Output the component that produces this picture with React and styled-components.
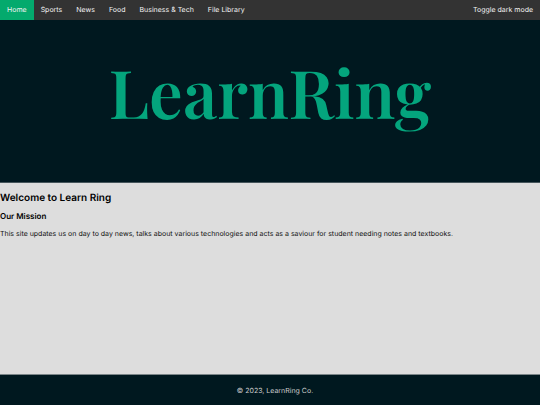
import React from 'react'
import styled, { createGlobalStyle } from 'styled-components'

const links = ['Sports', 'News', 'Food', 'Business & Tech', 'File Library']

const App = () => (
    <Page>
        <GlobalStyle />
        <Nav>
            <NavLink href="#home" $active>Home</NavLink>
            {links.map(name => <NavLink href="#" key={name}>{name}</NavLink>)}
            <Toggle type="button">Toggle dark mode</Toggle>
        </Nav>
        <Banner>
            <Logo>LearnRing</Logo>
        </Banner>
        <Main>
            <Title>Welcome to Learn Ring</Title>
            <SubTitle>Our Mission</SubTitle>
            <Text>
                This site updates us on day to day news, talks about various technologies
                and acts as a saviour for student needing notes and textbooks.
            </Text>
        </Main>
        <Footer>© 2023, LearnRing Co.</Footer>
    </Page>
)

export default App

const GlobalStyle = createGlobalStyle`
    * {
        box-sizing: border-box;
    }
    body {
        margin: 0;
        background: #ddd;
        color: #000;
        font-family: Inter, sans-serif;
        font-size: 7px;
        text-rendering: geometricPrecision;
    }
`
const Page = styled.div`
    min-height: 100vh;
    display: flex;
    flex-direction: column;
`
const Nav = styled.nav`
    display: flex;
    background: #333;
`
const NavLink = styled.a`
    padding: 0 7px;
    line-height: 20px;
    color: #f2f2f2;
    text-decoration: none;
    background: ${props => props.$active ? '#04aa6d' : 'transparent'};
`
const Toggle = styled.button`
    margin-left: auto;
    padding: 0 7px;
    border: 0;
    background: transparent;
    color: #f2f2f2;
    font: inherit;
    line-height: 20px;
    text-rendering: inherit;
`
const Banner = styled.header`
    padding: 32px 16px 50px;
    border-bottom: 1px solid #45555b;
    background: #00181f;
    text-align: center;
`
const Logo = styled.div`
    color: #04a57d;
    font-family: 'Playfair Display', 'Liberation Serif', serif;
    font-size: 67px;
    font-weight: 600;
    line-height: 80px;
`
const Main = styled.main`
    flex: 1;
    padding-top: 8px;
`
const Title = styled.h2`
    margin: 0 0 6px;
    font-size: 10px;
    font-weight: 600;
    line-height: 14px;
`
const SubTitle = styled.h3`
    margin: 0 0 8px;
    font-size: 8px;
    font-weight: 600;
    line-height: 10px;
`
const Text = styled.p`
    margin: 0;
    color: #111;
    line-height: 10px;
`
const Footer = styled.footer`
    padding: 1px 0 0 10px;
    border-top: 1px solid #7b8588;
    background: #00181f;
    color: #ccc;
    line-height: 29px;
    text-align: center;
`
